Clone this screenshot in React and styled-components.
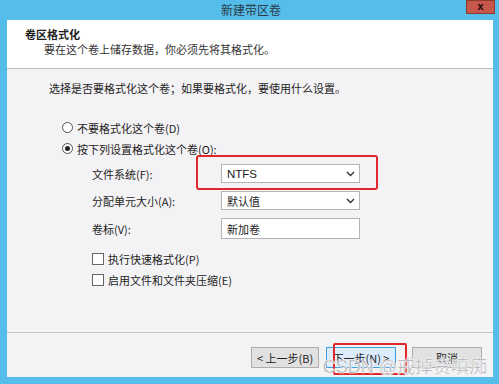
import React from 'react';
import styled, { createGlobalStyle } from 'styled-components';

const GlobalStyle = createGlobalStyle`
  html, body {
    margin: 0;
    padding: 0;
    background: #55bde9;
    overflow: hidden;
  }
  body {
    font-family: "Noto Sans CJK SC", "Microsoft YaHei", sans-serif;
    font-size: 11px;
    color: #1e1e1e;
  }
`

const Window = styled.div`
  position: relative;
  width: 499px;
  height: 384px;
  box-sizing: border-box;
  padding: 0 6px 7px 7px;
  background: #55bde9;
  display: flex;
  flex-direction: column;
`

const TitleBar = styled.div`
  position: relative;
  z-index: 5;
  height: 20px;
  flex-shrink: 0;
  display: flex;
  align-items: flex-start;
  margin-right: -2px;
`

const TitleSpacer = styled.div`
  width: 29px;
`

const Title = styled.div`
  flex: 1;
  text-align: center;
  line-height: 20px;
  font-size: 12px;
  color: #2a3b48;
`

const CloseButton = styled.span`
  position: relative;
  z-index: 6;
  display: inline-flex;
  width: 29px;
  height: 14px;
  flex-shrink: 0;
  background: #c8574b;
  box-shadow: inset 0 0 0 1px #8f3a30;
  align-items: center;
  justify-content: center;
  color: #2a0f0f;
  font-family: "DejaVu Sans", sans-serif;
  font-weight: bold;
  font-size: 10px;
  line-height: 14px;
`

const Panel = styled.div`
  flex: 1;
  display: flex;
  flex-direction: column;
  background: #f3f2f4;
`

const Header = styled.div`
  height: 49px;
  flex-shrink: 0;
  background: #fff;
  border-bottom: 1px solid #b9b9b9;
  padding: 7px 0 0 18px;
  box-sizing: border-box;
`

const HeaderTitle = styled.div`
  font-weight: bold;
  line-height: 15px;
`

const HeaderText = styled.div`
  padding-left: 19px;
  line-height: 15px;
  color: #333;
`

const Content = styled.div`
  flex: 1;
  padding: 11px 0 0 42px;
  border-bottom: 1px solid #c4c4c4;
`

const Intro = styled.div`
  line-height: 16px;
  margin-bottom: 21px;
`

const OptionRow = styled.label`
  display: flex;
  align-items: center;
  gap: 4px;
  height: 21px;
  margin-left: ${p => p.$indent || 13}px;
`

const Radio = styled.span`
  width: 9px;
  height: 9px;
  border-radius: 50%;
  border: 1px solid #555;
  background: #fff;
  display: flex;
  align-items: center;
  justify-content: center;

  &::after {
    content: '';
    width: 5px;
    height: 5px;
    border-radius: 50%;
    background: ${p => p.$checked ? '#222' : 'transparent'};
  }
`

const Checkbox = styled.span`
  width: 10px;
  height: 10px;
  border: 1px solid #666;
  background: #fff;
`

const Form = styled.div`
  margin: 5px 0 9px 43px;
  display: grid;
  grid-template-columns: 129px 139px;
  row-gap: 8px;
  align-items: center;
`

const FieldLabel = styled.div`
  line-height: 16px;
`

const Field = styled.div`
  position: relative;
  height: ${p => p.$tall ? 21 : 19}px;
  box-sizing: border-box;
  border: 1px solid #b4b4b4;
  background: #fff;
  display: flex;
  align-items: center;
  justify-content: space-between;
  padding: 0 4px 0 5px;
  font-size: ${p => p.$latin ? '11.5px' : '11px'};
  font-family: ${p => p.$latin ? '"Liberation Sans", sans-serif' : 'inherit'};
  color: #222;
`

const Highlight = styled.div`
  position: absolute;
  left: -26px;
  right: -19px;
  top: -10px;
  bottom: -8px;
  border: 2px solid #e0282a;
  border-radius: 3px;
  pointer-events: none;
`

const Footer = styled.div`
  height: 44px;
  flex-shrink: 0;
  display: flex;
  align-items: flex-start;
  justify-content: flex-end;
  padding: 14px 11px 0 0;
  box-sizing: border-box;
  gap: 7px;
`

const Button = styled.div`
  position: relative;
  width: ${p => p.$w}px;
  height: 21px;
  box-sizing: border-box;
  border: 1px solid ${p => p.$primary ? '#3c9ee0' : '#adadad'};
  background: ${p => p.$primary ? '#dcecfc' : '#e1e1e1'};
  display: flex;
  align-items: center;
  justify-content: center;
  color: #222;
  margin-left: ${p => p.$gap || 0}px;
`

const ButtonMark = styled.div`
  position: absolute;
  left: 6px;
  right: -12px;
  top: -5px;
  bottom: -8px;
  border: 2px solid #e0282a;
  border-radius: 2px;
  pointer-events: none;
`

const Watermark = styled.div`
  position: absolute;
  right: 12px;
  bottom: 6px;
  font-size: 18px;
  font-family: "Liberation Sans", "Noto Sans CJK SC", sans-serif;
  color: #a5a5aa;
  -webkit-text-stroke: 0.5px #f4f4f4;
  text-shadow: 0 0 2px rgba(255,255,255,0.9);
  pointer-events: none;
  white-space: nowrap;
`

const Chevron = () => (
  <svg width="9" height="6" viewBox="0 0 9 6">
    <path d="M1 1 L4.5 4.5 L8 1" fill="none" stroke="#333" strokeWidth="1.4" />
  </svg>
)

const App = () => {
  return (
    <Window>
      <GlobalStyle />
      <TitleBar>
        <TitleSpacer />
        <Title>新建带区卷</Title>
        <CloseButton>x</CloseButton>
      </TitleBar>
      <Panel>
        <Header>
          <HeaderTitle>卷区格式化</HeaderTitle>
          <HeaderText>要在这个卷上储存数据，你必须先将其格式化。</HeaderText>
        </Header>
        <Content>
          <Intro>选择是否要格式化这个卷；如果要格式化，要使用什么设置。</Intro>
          <OptionRow><Radio />不要格式化这个卷(D)</OptionRow>
          <OptionRow><Radio $checked />按下列设置格式化这个卷(O):</OptionRow>
          <Form>
            <FieldLabel>文件系统(F):</FieldLabel>
            <Field $latin>
              NTFS
              <Chevron />
              <Highlight />
            </Field>
            <FieldLabel>分配单元大小(A):</FieldLabel>
            <Field>默认值<Chevron /></Field>
            <FieldLabel>卷标(V):</FieldLabel>
            <Field $tall>新加卷</Field>
          </Form>
          <OptionRow $indent={43}><Checkbox />执行快速格式化(P)</OptionRow>
          <OptionRow $indent={43}><Checkbox />启用文件和文件夹压缩(E)</OptionRow>
        </Content>
        <Footer>
          <Button $w={68}>&lt; 上一步(B)</Button>
          <Button $w={70} $primary>
            下一步(N) &gt;
            <ButtonMark />
          </Button>
          <Button $w={70} $gap={9}>取消</Button>
        </Footer>
      </Panel>
      <Watermark>CSDN @戒掉贪嗔痴</Watermark>
    </Window>
  );
}

export default App;
